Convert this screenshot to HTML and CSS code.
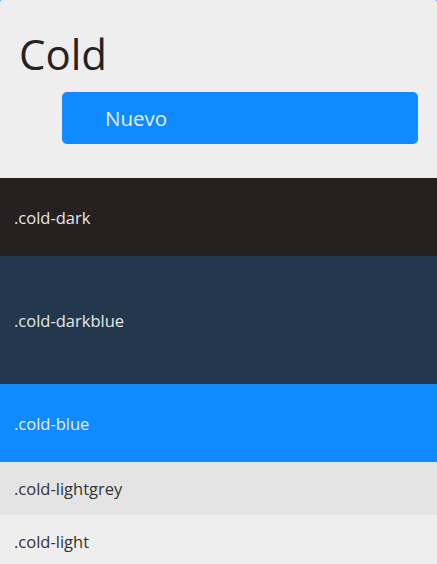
FILE: index.html
```html
<!DOCTYPE html>
<html lang="es">
<head>
<meta charset="utf-8">
<link rel="stylesheet" href="styles.css">
</head>
<body>
<div class="page">
  <header class="head">
    <h1 class="title">Cold</h1>
    <div class="actions"><button class="btn">Nuevo</button></div>
  </header>
  <div class="swatch cold-dark">.cold-dark</div>
  <div class="swatch cold-darkblue">.cold-darkblue</div>
  <div class="swatch cold-blue">.cold-blue</div>
  <div class="swatch cold-lightgrey">.cold-lightgrey</div>
  <div class="swatch cold-light">.cold-light</div>
</div>
</body>
</html>
```
FILE: styles.css
```css
html, body { margin: 0; padding: 0; }
body {
  background: #108bff;
  font-family: "Open Sans", "Noto Sans", sans-serif;
  width: 437px;
  height: 564px;
  overflow: hidden;
}
.page {
  background: #eeeeee;
  border-radius: 2px 2px 0 0;
  min-height: 564px;
}
.head {
  height: 178px;
  box-sizing: border-box;
  padding: 26px 19px 0 19px;
}
.title {
  margin: 0;
  font-weight: 400;
  font-size: 42px;
  line-height: 56px;
  color: #272222;
}
.actions {
  display: flex;
  padding-left: 43px;
  margin-top: 10px;
}
.btn {
  flex: 1;
  height: 52px;
  border: none;
  border-radius: 5px;
  background: #108bff;
  color: #e3efff;
  font-family: inherit;
  font-size: 20.5px;
  text-align: left;
  padding: 0 0 0 43px;
}
.swatch {
  display: flex;
  align-items: center;
  padding-left: 14px;
  font-size: 16.5px;
}
.cold-dark { background: #262121; color: #e6e6e6; height: 78px; }
.cold-darkblue { background: #23374d; color: #e6e6e6; height: 128px; }
.cold-blue { background: #108bff; color: #e6eeff; height: 78px; }
.cold-lightgrey { background: #e4e4e4; color: #333; height: 53px; }
.cold-light { background: #eeeeee; color: #333; height: 53px; }
```
